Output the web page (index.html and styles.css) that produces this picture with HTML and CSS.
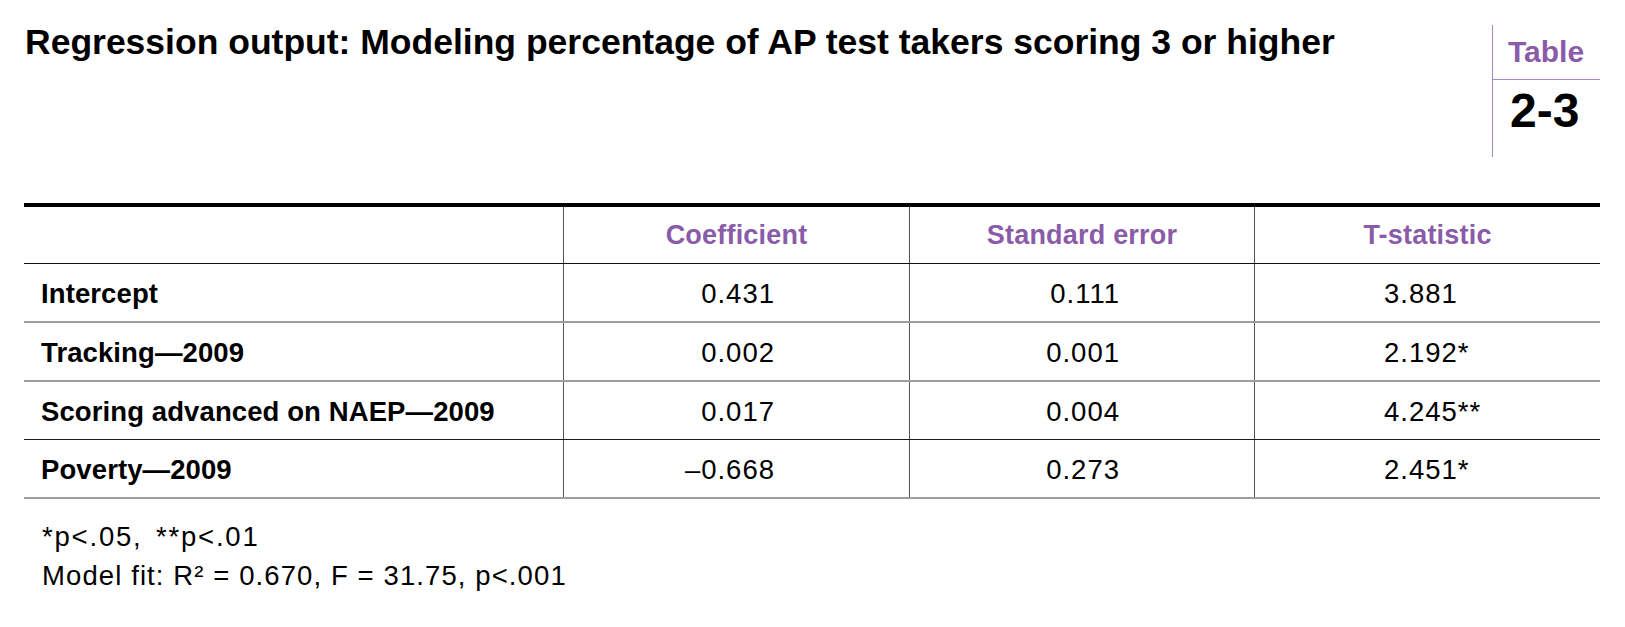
FILE: index.html
```html
<!DOCTYPE html>
<html lang="en">
<head>
<meta charset="utf-8">
<title>Table 2-3</title>
<link rel="stylesheet" href="styles.css">
</head>
<body>
<div class="page">
  <header class="top">
    <h1 class="title">Regression output: Modeling percentage of AP test takers scoring 3 or higher</h1>
    <div class="badge">
      <div class="badge-label">Table</div>
      <div class="badge-num">2-3</div>
    </div>
  </header>

  <div class="table">
    <div class="row head">
      <div class="cell label"></div>
      <div class="cell col">Coefficient</div>
      <div class="cell col">Standard error</div>
      <div class="cell col">T-statistic</div>
    </div>
    <div class="row grey">
      <div class="cell label">Intercept</div>
      <div class="cell num coef">0.431</div>
      <div class="cell num se">0.111</div>
      <div class="cell num tstat">3.881</div>
    </div>
    <div class="row grey">
      <div class="cell label">Tracking—2009</div>
      <div class="cell num coef">0.002</div>
      <div class="cell num se">0.001</div>
      <div class="cell num tstat">2.192*</div>
    </div>
    <div class="row dark">
      <div class="cell label">Scoring advanced on NAEP—2009</div>
      <div class="cell num coef">0.017</div>
      <div class="cell num se">0.004</div>
      <div class="cell num tstat">4.245**</div>
    </div>
    <div class="row grey">
      <div class="cell label">Poverty—2009</div>
      <div class="cell num coef">–0.668</div>
      <div class="cell num se">0.273</div>
      <div class="cell num tstat">2.451*</div>
    </div>
  </div>

  <div class="notes">
    <p class="note sig">*p&lt;.05, **p&lt;.01</p>
    <p class="note">Model fit: R² = 0.670, F = 31.75, p&lt;.001</p>
  </div>
</div>
</body>
</html>
```

FILE: styles.css
```css
* {
  box-sizing: border-box;
}

html, body {
  margin: 0;
  padding: 0;
  background: #ffffff;
}

body {
  font-family: "Liberation Sans", Arial, Helvetica, sans-serif;
  color: #000000;
}

.page {
  width: 1625px;
  padding-right: 25px;
}

.top {
  display: flex;
  justify-content: space-between;
  align-items: flex-start;
}

.title {
  margin: 0;
  padding: 19px 0 0 25px;
  font-size: 35.5px;
  line-height: 46px;
  font-weight: 700;
  letter-spacing: 0;
  white-space: nowrap;
}

.badge {
  margin-top: 25px;
  width: 108px;
  height: 132px;
  border-left: 1px solid #a88bc6;
}

.badge-label {
  height: 55px;
  padding: 12px 0 0 15px;
  border-bottom: 1px solid #a88bc6;
  font-size: 30px;
  line-height: 30px;
  font-weight: 700;
  color: #8a5ba8;
}

.badge-num {
  padding: 7px 0 0 17px;
  font-size: 48px;
  line-height: 48px;
  font-weight: 700;
}

.table {
  margin: 46px 0 0 24px;
  width: 1576px;
  border-top: 4px solid #000000;
}

.row {
  display: grid;
  grid-template-columns: 539px 346px 345px 346px;
}

.row.head {
  border-bottom: 1px solid #111111;
}

.row.grey {
  border-bottom: 2px solid #9d9d9d;
}

.row.dark {
  border-bottom: 1px solid #1a1a1a;
}

.cell {
  height: 57px;
  padding-top: 2px;
  line-height: 55px;
  font-size: 27.5px;
  white-space: nowrap;
}

.cell + .cell {
  border-left: 1px solid #555555;
}

.head .cell {
  height: 56px;
  padding-top: 0;
  line-height: 56px;
  font-size: 27px;
}

.col {
  text-align: center;
  font-weight: 700;
  color: #8a5ba8;
  letter-spacing: 0.2px;
}

.label {
  padding-left: 17px;
  font-weight: 700;
  letter-spacing: 0.1px;
}

.num {
  letter-spacing: 1px;
}

.coef,
.se {
  text-align: right;
  padding-right: 134px;
}

.tstat {
  text-align: left;
  padding-left: 129px;
}

.notes {
  padding: 18px 0 0 42px;
}

.note {
  margin: 0;
  font-size: 27.5px;
  line-height: 39px;
  letter-spacing: 1.1px;
}

.sig {
  word-spacing: 4px;
  letter-spacing: 1.8px;
}
```
